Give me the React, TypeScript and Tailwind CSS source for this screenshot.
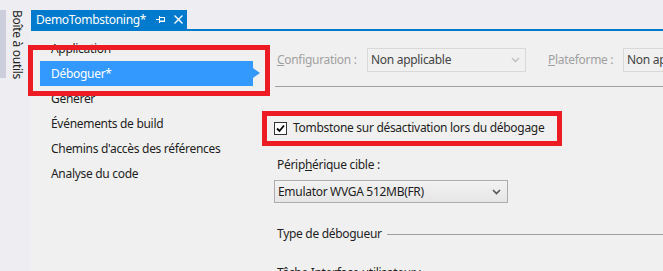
import React from "react";

function Chevron({ color }: { color: string }) {
  return (
    <svg width="9" height="6" viewBox="0 0 9 6" className="shrink-0">
      <path d="M1 1 L4.5 4.5 L8 1" fill="none" stroke={color} strokeWidth="1.6" />
    </svg>
  );
}

function PinIcon() {
  return (
    <svg width="10" height="9" viewBox="0 0 10 9" className="shrink-0">
      <path d="M0 4.5 H3" stroke="white" strokeWidth="1" />
      <path d="M3.5 1 V8" stroke="white" strokeWidth="1" />
      <rect x="3.5" y="2.5" width="5" height="4" fill="none" stroke="white" strokeWidth="1" />
      <path d="M3.5 6 H9" stroke="white" strokeWidth="1" />
    </svg>
  );
}

function CloseIcon() {
  return (
    <svg width="9" height="9" viewBox="0 0 9 9" className="shrink-0">
      <path d="M0.5 0.5 L8.5 8.5 M8.5 0.5 L0.5 8.5" stroke="white" strokeWidth="1.4" />
    </svg>
  );
}

const navItems = [
  "Application",
  "Déboguer*",
  "Générer",
  "Événements de build",
  "Chemins d'accès des références",
  "Analyse du code",
];

export default function App() {
  return (
    <div className="relative w-[663px] h-[271px] overflow-hidden flex bg-[#eeeef2] text-[12px] tracking-[-0.3px] text-[#1e1e1e] font-['Noto_Sans',sans-serif] leading-none">
      {/* Toolbox side tab */}
      <aside className="w-[31px] shrink-0 pt-[10px] flex items-start">
        <div className="w-[6px] h-[68px] bg-[#cccedb]" />
        <div className="ml-[6px] [writing-mode:vertical-rl] text-[12px] leading-[10px] text-[#1e1e1e] whitespace-nowrap">
          Boîte à outils
        </div>
      </aside>

      {/* Main */}
      <div className="flex-1 min-w-0 flex flex-col">
        <div className="h-[10px] shrink-0" />
        <div className="flex h-[19px] shrink-0">
          <div className="w-[156px] bg-[#007acc] text-white flex items-center pl-[5px]">
            <span className="whitespace-nowrap">DemoTombstoning*</span>
            <span className="ml-[10px] flex items-center"><PinIcon /></span>
            <span className="ml-[8px] flex items-center"><CloseIcon /></span>
          </div>
        </div>
        <div className="h-[2px] bg-[#007acc] shrink-0" />

        <div className="flex-1 flex bg-[#f0f0f0] min-h-0">
          {/* Left nav */}
          <nav className="w-[244px] shrink-0 pt-[5px] pl-[9px] flex flex-col">
            {navItems.map((item) =>
              item === "Déboguer*" ? (
                <div
                  key={item}
                  className="relative h-[25px] shrink-0 w-[213px] bg-[#3399ff] text-white flex items-center pl-[11px]"
                >
                  {item}
                  <span className="absolute right-[-7px] top-[7px] w-0 h-0 border-y-[5px] border-y-transparent border-l-[7px] border-l-[#3399ff]" />
                </div>
              ) : (
                <div key={item} className="h-[25px] shrink-0 flex items-center pl-[11px] whitespace-nowrap">
                  {item}
                </div>
              )
            )}
          </nav>

          {/* Content */}
          <div className="flex-1 min-w-0 pt-[17px] flex flex-col">
            <div className="flex items-center h-[24px] shrink-0 whitespace-nowrap">
              <div className="w-[92px] pl-[2px] text-[#a0a0a0] shrink-0">
                <span className="underline">C</span>onfiguration :
              </div>
              <div className="w-[159px] h-[24px] shrink-0 border border-[#d9d9d9] flex items-center justify-between pl-[3px] pr-[5px] text-[#444]">
                <span>Non applicable</span>
                <Chevron color="#c4c4c4" />
              </div>
              <div className="ml-[22px] w-[75px] shrink-0 text-[#a0a0a0]">
                <span className="underline">P</span>lateforme :
              </div>
              <div className="w-[120px] h-[24px] shrink-0 border border-[#d9d9d9] flex items-center pl-[3px] text-[#444]">
                Non applicable
              </div>
            </div>

            <div className="mt-[14px] shrink-0 border-t border-[#a0a0a0]" />

            <div className="mt-[31px] h-[20px] shrink-0 flex items-center -ml-[1px] whitespace-nowrap">
              <div className="w-[13px] h-[13px] border border-[#333] bg-white flex items-center justify-center shrink-0">
                <svg width="9" height="9" viewBox="0 0 9 9">
                  <path d="M1 4.5 L3.5 7 L8 1.5" fill="none" stroke="#000" strokeWidth="1.8" />
                </svg>
              </div>
              <span className="ml-[6px]">Tombstone sur désactivation lors du débogage</span>
            </div>

            <div className="mt-[18px] h-[18px] shrink-0 flex items-center pl-[2px] whitespace-nowrap">
              Périp<span className="underline">h</span>érique cible :
            </div>

            <div className="mt-[6px] -ml-[1px] w-[234px] h-[23px] shrink-0 border border-[#acacac] bg-gradient-to-b from-[#f2f2f2] to-[#e6e6e6] flex items-center justify-between pl-[3px] pr-[6px] whitespace-nowrap">
              <span>Emulator WVGA 512MB(FR)</span>
              <Chevron color="#555" />
            </div>

            <div className="mt-[22px] h-[18px] shrink-0 flex items-center pl-[2px] whitespace-nowrap">
              <span>Type de débogueur</span>
              <div className="flex-1 ml-[5px] border-t border-[#a0a0a0]" />
            </div>

            <div className="mt-[21px] h-[18px] shrink-0 flex items-center pl-[2px] whitespace-nowrap">
              Tâche Interface utilisateur :
            </div>
          </div>
        </div>
      </div>

      {/* Red annotation boxes */}
      <div className="absolute left-[28px] top-[45px] w-[242px] h-[51px] border-[5px] border-[#ed1c24] pointer-events-none" />
      <div className="absolute left-[262px] top-[111px] w-[300px] h-[35px] border-[5px] border-[#ed1c24] pointer-events-none" />
    </div>
  );
}
